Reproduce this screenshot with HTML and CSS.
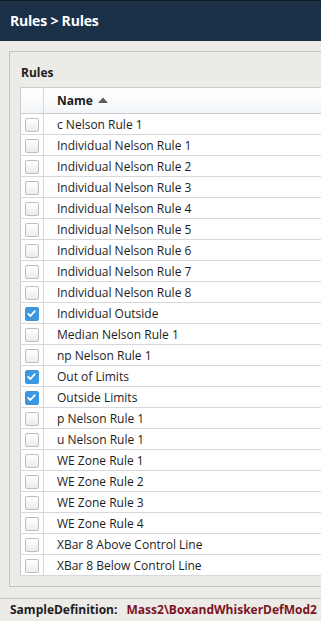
FILE: index.html
```html
<!DOCTYPE html>
<html lang="en">
<head>
  <meta charset="UTF-8" />
  <title>Rules</title>
  <link rel="stylesheet" href="styles.css">
</head>
<body>
  <div class="topbar">Rules &gt; Rules</div>

  <div class="content">
    <div class="panel">
      <div class="panel-title">Rules</div>
      <table class="grid">
        <thead>
          <tr>
            <th class="chk-col"></th>
            <th class="name-col">Name <svg class="sort" viewBox="0 0 10 6" width="10" height="6"><path d="M0 6 L5 0.5 L10 6 Z" fill="#5c5c5c"/></svg></th>
          </tr>
        </thead>
        <tbody>
          <tr><td class="chk-col"><span class="cb"></span></td><td>c Nelson Rule 1</td></tr>
          <tr><td class="chk-col"><span class="cb"></span></td><td>Individual Nelson Rule 1</td></tr>
          <tr><td class="chk-col"><span class="cb"></span></td><td>Individual Nelson Rule 2</td></tr>
          <tr><td class="chk-col"><span class="cb"></span></td><td>Individual Nelson Rule 3</td></tr>
          <tr><td class="chk-col"><span class="cb"></span></td><td>Individual Nelson Rule 4</td></tr>
          <tr><td class="chk-col"><span class="cb"></span></td><td>Individual Nelson Rule 5</td></tr>
          <tr><td class="chk-col"><span class="cb"></span></td><td>Individual Nelson Rule 6</td></tr>
          <tr><td class="chk-col"><span class="cb"></span></td><td>Individual Nelson Rule 7</td></tr>
          <tr><td class="chk-col"><span class="cb"></span></td><td>Individual Nelson Rule 8</td></tr>
          <tr><td class="chk-col"><span class="cb checked"><svg viewBox="0 0 13 13" width="13" height="13"><path d="M3.2 6.8 L5.4 9 L9.8 4.2" fill="none" stroke="#fff" stroke-width="1.8" stroke-linecap="round" stroke-linejoin="round"/></svg></span></td><td>Individual Outside</td></tr>
          <tr><td class="chk-col"><span class="cb"></span></td><td>Median Nelson Rule 1</td></tr>
          <tr><td class="chk-col"><span class="cb"></span></td><td>np Nelson Rule 1</td></tr>
          <tr><td class="chk-col"><span class="cb checked"><svg viewBox="0 0 13 13" width="13" height="13"><path d="M3.2 6.8 L5.4 9 L9.8 4.2" fill="none" stroke="#fff" stroke-width="1.8" stroke-linecap="round" stroke-linejoin="round"/></svg></span></td><td>Out of Limits</td></tr>
          <tr><td class="chk-col"><span class="cb checked"><svg viewBox="0 0 13 13" width="13" height="13"><path d="M3.2 6.8 L5.4 9 L9.8 4.2" fill="none" stroke="#fff" stroke-width="1.8" stroke-linecap="round" stroke-linejoin="round"/></svg></span></td><td>Outside Limits</td></tr>
          <tr><td class="chk-col"><span class="cb"></span></td><td>p Nelson Rule 1</td></tr>
          <tr><td class="chk-col"><span class="cb"></span></td><td>u Nelson Rule 1</td></tr>
          <tr><td class="chk-col"><span class="cb"></span></td><td>WE Zone Rule 1</td></tr>
          <tr><td class="chk-col"><span class="cb"></span></td><td>WE Zone Rule 2</td></tr>
          <tr><td class="chk-col"><span class="cb"></span></td><td>WE Zone Rule 3</td></tr>
          <tr><td class="chk-col"><span class="cb"></span></td><td>WE Zone Rule 4</td></tr>
          <tr><td class="chk-col"><span class="cb"></span></td><td>XBar 8 Above Control Line</td></tr>
          <tr><td class="chk-col"><span class="cb"></span></td><td>XBar 8 Below Control Line</td></tr>
        </tbody>
      </table>
    </div>
  </div>

  <div class="footer">
    <span class="footer-label">SampleDefinition:</span>
    <span class="footer-value">Mass2\BoxandWhiskerDefMod2</span>
  </div>
</body>
</html>
```

FILE: styles.css
```css
body {
  margin: 0;
  background-color: #ecebe7;
  font-family: 'Open Sans', 'Noto Sans', sans-serif;
  font-size: 12px;
  color: #222;
}

.topbar {
  height: 40px;
  border-top: 1px solid #0f1c28;
  background-color: #1b3147;
  color: #ffffff;
  font-weight: bold;
  font-size: 14px;
  line-height: 40px;
  padding-left: 10px;
  letter-spacing: -0.2px;
}

.content {
  padding: 10px 0 0 9px;
}

.panel {
  border: 1px solid #c4c3bf;
  border-right: none;
  padding: 0 0 10px 10px;
}

.panel-title {
  font-weight: bold;
  font-size: 12px;
  line-height: 16px;
  padding: 13px 0 6px 1px;
  color: #1d1d1d;
}

.grid {
  border-collapse: collapse;
  width: 100%;
  background-color: #ffffff;
  border: 1px solid #c9cdd2;
  border-right: none;
}

.grid th {
  height: 25px;
  background: linear-gradient(#ffffff, #f2f5f8);
  border-bottom: 1px solid #c9cdd2;
  text-align: left;
  font-weight: bold;
  color: #1d1d1d;
  padding: 0;
}

.grid td {
  height: 20px;
  padding: 0;
  border-bottom: 1px solid #d6d8da;
  color: #1d1d1d;
  white-space: nowrap;
}

.grid .chk-col {
  width: 22px;
  border-right: 1px solid #d6d8da;
  text-align: center;
}

.grid td:last-child,
.grid .name-col {
  padding-left: 13px;
}

.sort {
  margin-left: 2px;
  vertical-align: 2px;
}

.cb {
  display: inline-block;
  width: 12px;
  height: 12px;
  border: 1px solid #bdbdbd;
  border-radius: 2px;
  background: linear-gradient(#ffffff, #ececec);
  vertical-align: middle;
  margin-top: -1px;
  position: relative;
}

.cb.checked {
  border-color: #3b97df;
  background: #3b97df;
}

.cb svg {
  position: absolute;
  left: -1px;
  top: -1px;
}

.footer {
  margin-top: 11px;
  height: 22px;
  line-height: 22px;
  border-top: 1px solid #c6c5c1;
  border-bottom: 1px solid #c6c5c1;
  padding-left: 10px;
  font-weight: bold;
  font-size: 12px;
  white-space: nowrap;
  overflow: hidden;
}

.footer-label {
  color: #1d1d1d;
}

.footer-value {
  color: #7b1424;
  margin-left: 6px;
}
```
